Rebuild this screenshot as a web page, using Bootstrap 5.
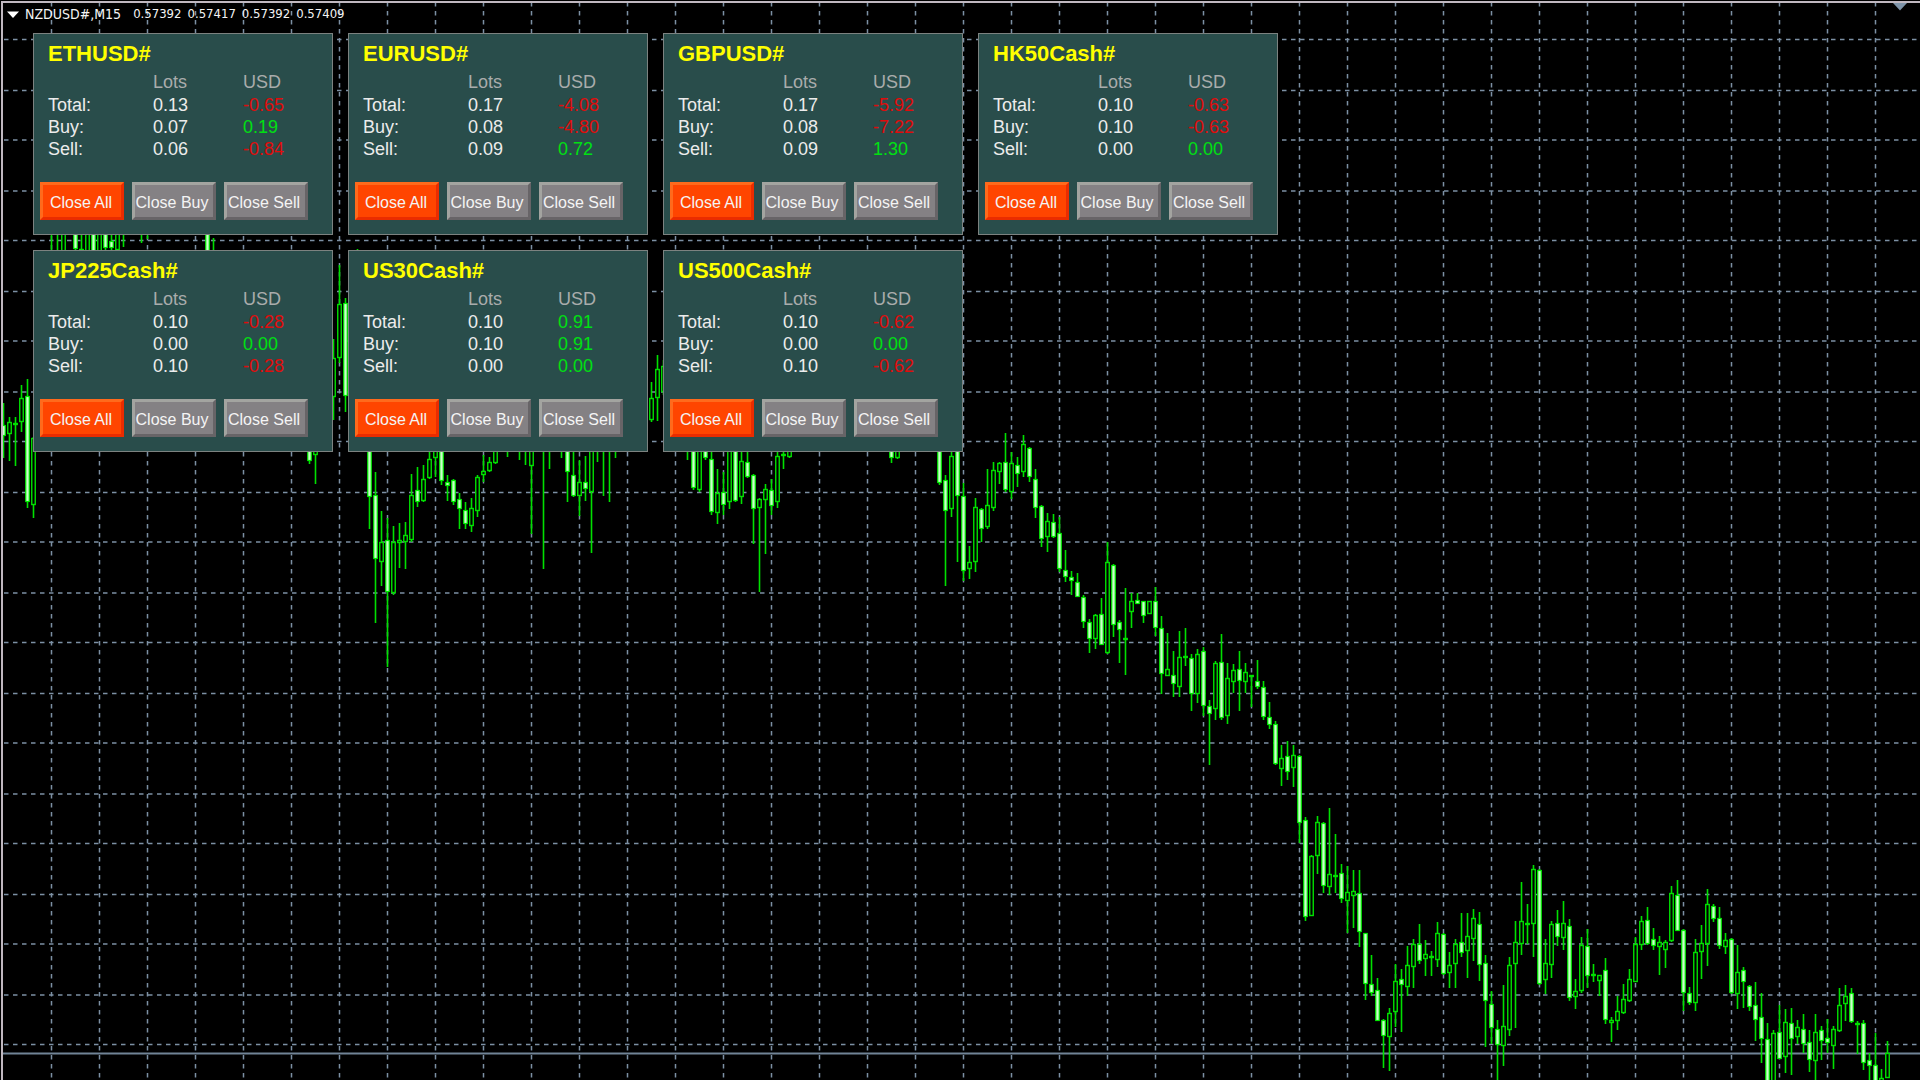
<!DOCTYPE html>
<html lang="en">
<head>
<meta charset="utf-8">
<meta name="viewport" content="width=device-width, initial-scale=1">
<title>NZDUSD#,M15</title>
<link href="https://cdn.jsdelivr.net/npm/bootstrap@5.3.0/dist/css/bootstrap.min.css" rel="stylesheet">
<style>
  body { background: #000; font-family: "Liberation Sans", Arial, sans-serif; }
  .chart-window { min-height: 100vh; border: 1px solid #000; border-right: 0; border-bottom: 0; }
  .chart-frame { min-height: calc(100vh - 1px); border-left: 2px solid #c0b8c0; border-top: 2px solid #c0b8c0; padding: 0 0 0 4px; }
  .chart-canvas { position: absolute; inset: 0; width: 100%; height: 100%; }
  .grid-line { stroke: #7c90a4; stroke-width: 1.5; stroke-dasharray: 4.5 4.5; fill: none; }
  .bid-line { stroke: #708396; stroke-width: 2; }
  .wick { stroke: #00e000; stroke-width: 1.6; fill: none; }
  .bar-up { stroke: #00e000; stroke-width: 1.4; fill: #000; }
  .bar-down { stroke: #00ee00; stroke-width: 1.2; fill: #ccffcc; }
  .quote-bar { height: 29px; gap: 6px; color: #f4f4f4; font: 14px/18px "DejaVu Sans Condensed", "DejaVu Sans", sans-serif; padding-top: 2px; }
  .quote-list { gap: 6px; padding-left: 6px; font-size: 13px; }
  .desk { padding: 1px 0 0 26px; gap: 15px; }
  .desk-row { gap: 15px; }
  .symbol-panel { width: 300px; background: #294d4b; border: 1px solid #7c8280; padding: 7px 6px 14px; }
  .symbol-name { font-size: 22px; line-height: 26px; font-weight: 700; color: #ff0; margin: 0 0 4px 8px; }
  .totals { margin: 0 0 22px 8px; table-layout: fixed; width: 270px; font-size: 18px; line-height: 22px; color: #ececec; }
  .totals th, .totals td { padding: 0; font-weight: 400; text-align: left; }
  .totals thead { color: #a9acac; }
  .totals thead th { padding-bottom: 1px; }
  .totals .col-label { width: 105px; }
  .totals .col-lots { width: 90px; }
  .gain { color: #00e012; }
  .loss { color: #e00c0c; }
  .actions { gap: 8px; }
  .btn-close-set { width: 84px; height: 38px; padding: 4px 4px 0 0; border-radius: 0; white-space: nowrap;
    font-size: 16px; line-height: 20px; color: #f4f4f4; background: #848184;
    border: 3px solid; border-color: #a3a4a0 #676467 #676467 #a3a4a0; }
  .btn-close-set:hover { color: #fff; background: #908d90; border-color: #a3a4a0 #676467 #676467 #a3a4a0; }
  .btn-close-set.whole { padding-right: 2px; background: #ff4500; border-color: #ff6a1c #ea2c00 #ea2c00 #ff6a1c; }
</style>
<script src="https://cdn.jsdelivr.net/npm/bootstrap@5.3.0/dist/js/bootstrap.bundle.min.js"></script>
</head>
<body class="overflow-hidden">
<div class="chart-window">
  <main class="chart-frame position-relative overflow-hidden">
    <svg class="chart-canvas" id="chart" role="img" aria-label="NZDUSD# candlestick chart"></svg>
    <header class="quote-bar position-relative d-flex align-items-start">
      <svg width="12" height="18" viewBox="0 0 12 18" aria-hidden="true"><path d="M0 6.500H12L6 13Z" fill="#fff"/></svg>
      <span>NZDUSD#,M15</span>
      <div class="quote-list d-flex"><span>0.57392</span><span>0.57417</span><span>0.57392</span><span>0.57409</span></div>
    </header>
    <div class="desk position-relative d-flex flex-column" id="desk"></div>
  </main>
</div>
<script>
// Each symbol: name, then [lots, profit] for total, buy and sell.
const rows = [
  [
    ['ETHUSD#', ['0.13', '-0.65'], ['0.07', '0.19'], ['0.06', '-0.84']],
    ['EURUSD#', ['0.17', '-4.08'], ['0.08', '-4.80'], ['0.09', '0.72']],
    ['GBPUSD#', ['0.17', '-5.92'], ['0.08', '-7.22'], ['0.09', '1.30']],
    ['HK50Cash#', ['0.10', '-0.63'], ['0.10', '-0.63'], ['0.00', '0.00']]
  ],
  [
    ['JP225Cash#', ['0.10', '-0.28'], ['0.00', '0.00'], ['0.10', '-0.28']],
    ['US30Cash#', ['0.10', '0.91'], ['0.10', '0.91'], ['0.00', '0.00']],
    ['US500Cash#', ['0.10', '-0.62'], ['0.00', '0.00'], ['0.10', '-0.62']]
  ]
];
const line = (label, v) => `<tr><th scope="row">${label}</th><td>${v[0]}</td><td class="${v[1][0] === '-' ? 'loss' : 'gain'}">${v[1]}</td></tr>`;
const panel = ([name, total, buy, sell]) => `
  <section class="symbol-panel">
    <h2 class="symbol-name">${name}</h2>
    <table class="totals">
      <thead><tr><td class="col-label"></td><th scope="col" class="col-lots">Lots</th><th scope="col">USD</th></tr></thead>
      <tbody>${line('Total:', total)}${line('Buy:', buy)}${line('Sell:', sell)}</tbody>
    </table>
    <div class="actions d-flex">
      <button type="button" class="btn btn-close-set whole">Close All</button>
      <button type="button" class="btn btn-close-set">Close Buy</button>
      <button type="button" class="btn btn-close-set">Close Sell</button>
    </div>
  </section>`;
document.getElementById('desk').innerHTML =
  rows.map(r => `<div class="desk-row d-flex">${r.map(panel).join('')}</div>`).join('');

// Candles: bar index, high, body top, body bottom, low, 1 = falling bar. Two numbers after the index: wick only.
const candles = [
[0,403,425,436,458,1],[1,417,422,434,461,0],[2,417,423,425,466,0],[3,385,398,422,432,0],[4,379,396,502,508,1],[5,437,438,505,518,0],
[8,230,255],[9,230,255],[10,228,229,258,259,0],[12,228,229,249,251,1],[13,230,249,253,255,0],[14,228,229,258,259,0],[15,228,229,258,259,1],[16,228,229,258,259,0],[17,228,229,248,250,1],[18,230,241,248,255,1],[19,228,229,250,251,0],[20,230,247],[23,230,243],[24,230,239],[34,228,229,258,259,1],[35,238,255],
[51,440,441,461,464,1],[52,440,441,455,484,0],[55,339,358,397,420,0],[56,265,304,358,363,0],[57,298,303,396,412,1],[59,249,260],
[61,440,441,497,529,1],[62,472,495,559,623,1],[63,511,542,562,586,0],[64,518,540,592,667,1],[65,526,542,593,595,0],[66,523,540,543,568,0],[67,522,535,542,569,0],[68,474,495,540,542,0],[69,467,490,502,507,1],[70,465,479,501,502,0],[71,448,459,478,479,0],[72,440,441,458,477,0],[73,440,441,481,485,1],[74,475,482,486,501,1],[75,479,480,502,505,1],[76,493,499,509,529,1],[77,502,510,524,529,1],[78,498,508,526,532,0],[79,475,477,511,517,0],[80,455,471,475,482,0],[81,457,462,471,472,0],[82,440,441,463,464,0],
[84,440,457],[86,440,460],[87,440,465],[88,440,441,466,534,0],[90,440,569],[91,440,469],[93,440,458],[94,440,441,472,502,1],[95,440,475,496,497,1],[96,460,482,496,516,0],[97,456,482,489,501,1],[98,440,441,492,553,0],[99,440,462],[100,440,496],[101,440,502],[102,440,458],
[108,382,398,420,422,0],[109,355,369,398,421,0],[110,360,366,392,395,0],[114,440,460],[115,440,441,488,490,1],[116,440,441,490,492,0],[117,440,441,458,460,1],[118,440,459,512,515,1],[119,469,493,513,524,0],[120,472,492,505,515,1],[121,440,441,502,509,0],[122,440,441,501,502,1],[123,440,461,497,504,0],[124,440,462,477,478,1],[125,474,475,509,544,1],[126,498,499,508,592,0],[127,484,489,500,554,0],[128,479,490,506,515,1],[129,440,456,502,508,0],[130,440,454,456,469,0],[131,440,441,457,458,0],[148,440,441,458,463,1],[149,440,441,458,459,0],
[156,440,441,483,485,1],[157,475,480,511,586,1],[158,440,456,509,517,0],[159,440,441,496,562,1],[160,483,496,571,581,1],[161,546,562,569,579,0],[162,498,507,562,572,0],[163,508,509,529,542,1],[164,469,505,527,529,0],[165,462,470,508,511,0],[166,462,463,472,484,0],[167,433,462,490,492,1],[168,452,463,492,499,0],[169,457,465,474,487,1],[170,435,444,472,477,0],[171,447,448,477,482,1],[172,469,479,508,518,1],
[173,505,506,539,547,1],[174,513,521,537,552,0],[175,514,522,537,538,1],[176,517,533,569,572,1],[177,550,570,577,582,1],[178,571,577,581,595,1],[179,573,582,597,597,1],[180,595,597,622,628,1],[181,619,622,639,653,1],[182,614,615,639,649,0],[183,598,614,645,645,1],[184,542,562,653,654,0],[185,564,565,625,637,1],[186,620,622,630,663,1],[187,588,638,640,675,0],[188,593,601,612,628,0],[189,593,600,604,604,1],[190,601,601,616,623,1],[191,601,601,614,614,0],[192,587,601,628,636,1],
[193,616,628,674,694,1],[194,633,669,676,676,0],[195,651,675,684,697,1],[196,631,657,687,697,0],[197,628,656,658,666,0],[198,654,658,694,711,1],[199,649,654,694,703,0],[200,647,651,706,716,1],[201,700,706,714,765,1],[202,661,663,709,720,0],[203,634,662,718,720,1],[204,663,678,716,724,0],[205,664,670,682,693,0],[206,651,669,681,711,1],[207,663,672,682,693,0],[208,675,675,677,707,0],[209,660,681,687,689,1],[210,681,687,717,720,1],[211,702,717,725,729,1],[212,721,724,764,765,1],[213,745,758,769,786,0],[214,741,756,772,780,1],[215,745,755,768,787,0],
[216,755,756,823,843,1],[217,817,820,917,921,1],[218,855,856,916,916,0],[219,816,822,856,874,0],[220,822,823,886,893,1],[221,808,874,887,895,0],[222,834,875,877,893,0],[223,864,873,899,903,1],[224,866,892,901,933,0],[225,870,891,896,928,0],[226,870,893,932,947,1],[227,933,933,984,1000,1],[228,955,984,993,996,1],[229,978,990,1021,1021,1],[230,1019,1020,1036,1068,1],[231,1008,1013,1037,1071,0],[232,964,981,1012,1027,0],[233,969,979,985,1032,1],[234,946,965,987,996,0],[235,939,944,967,988,0],[236,924,944,961,964,1],[237,940,954,959,976,0],[238,951,956,958,976,0],[239,922,933,960,967,0],[240,933,934,974,975,1],[241,952,965,973,988,0],[242,939,944,964,988,0],[243,913,942,953,957,1],[244,913,936,951,978,0],[245,909,918,939,961,0],[246,912,924,965,981,1],[247,955,963,1001,1047,1],[248,991,1004,1028,1044,1],[249,1020,1029,1045,1080,1],[250,985,1026,1046,1066,0],[251,957,965,1030,1036,0],[252,921,942,964,1028,0],[253,882,921,944,955,0],[254,904,923,925,944,0],[255,865,869,924,957,0],[256,869,870,984,985,1],[257,939,963,980,994,0],[258,921,924,965,978,0],[259,910,923,937,946,1],[260,901,923,938,950,0],[261,919,926,998,1001,1],[262,979,991,997,1009,0],[263,937,945,991,993,0],
[264,929,946,976,988,1],[265,964,974,976,982,0],[266,975,975,981,996,0],[267,958,970,1020,1024,1],[268,1017,1020,1023,1042,0],[269,996,1011,1021,1030,0],[270,984,999,1013,1014,0],[271,969,979,1001,1002,0],[272,937,944,982,982,0],[273,916,921,945,950,0],[274,907,920,944,945,1],[275,928,939,946,950,1],[276,936,942,947,975,0],[277,940,942,950,968,0],[278,886,893,941,942,0],[279,880,895,931,931,1],[280,929,930,993,1011,1],[281,987,993,1003,1005,1],[282,939,952,1003,1011,0],[283,925,943,952,979,0],[284,889,904,944,966,0],[285,904,906,919,922,1],[286,907,918,946,949,1],[287,933,940,947,954,0],[288,938,939,993,994,1],[289,945,972,994,1009,0],[290,967,970,982,1008,1],[291,985,986,1007,1011,1],[292,982,1005,1020,1041,1],[293,993,1017,1039,1063,1],[294,1023,1039,1085,1085,1],[295,1030,1033,1085,1085,0],[296,1005,1032,1059,1059,1],[297,1009,1022,1057,1073,0],[298,1008,1023,1039,1075,1],[299,1020,1027,1037,1044,0],[300,1014,1029,1044,1053,1],[301,1030,1042,1060,1072,1],[302,1014,1032,1061,1080,0],[303,1026,1030,1041,1060,1],[304,1019,1038,1043,1053,1],[305,1026,1029,1046,1069,0],[306,988,1005,1031,1032,0],[307,985,996,1004,1021,0],[308,988,993,1022,1023,1],[309,1021,1023,1025,1054,0],[310,1020,1023,1063,1070,1],[311,1053,1060,1066,1080,1],[312,1033,1065,1085,1085,1],[313,1069,1078,1085,1085,0],[314,1041,1053,1078,1078,0]
];

// The drawing area starts 3px inside the window's left and top edges.
const EDGE = 3;
function draw() {
  const w = window.innerWidth, h = window.innerHeight;
  let out = '';
  for (let y = 39.5, k = 0; y < h; y += k++ % 2 ? 49.5 : 51) out += `<path class="grid-line" d="M4 ${y}H${w}"/>`;
  for (let x = 51.5; x < w; x += 48) out += `<path class="grid-line" d="M${x} 2V${h}"/>`;
  out += `<path class="bid-line" d="M3 1053.5H${w}"/>`;
  for (const [i, high, top, bottom, low, down] of candles) {
    const x = 3.5 + 6 * i;
    if (bottom === undefined) { out += `<path class="wick" d="M${x} ${high}V${top}"/>`; continue; }
    out += `<path class="wick" d="M${x} ${high}V${low}"/>`;
    out += `<rect class="${down ? 'bar-down' : 'bar-up'}" x="${x - 1.75}" y="${top + .5}" width="3.5" height="${Math.max(bottom - top - 1, 1)}"/>`;
  }
  out += `<path fill="#7d93a8" d="M${w - 27} 3h14l-7 7.500z"/>`;
  document.getElementById('chart').innerHTML = `<g transform="translate(-${EDGE} -${EDGE})">${out}</g>`;
}
draw();
window.addEventListener('resize', draw);
</script>
</body>
</html>
